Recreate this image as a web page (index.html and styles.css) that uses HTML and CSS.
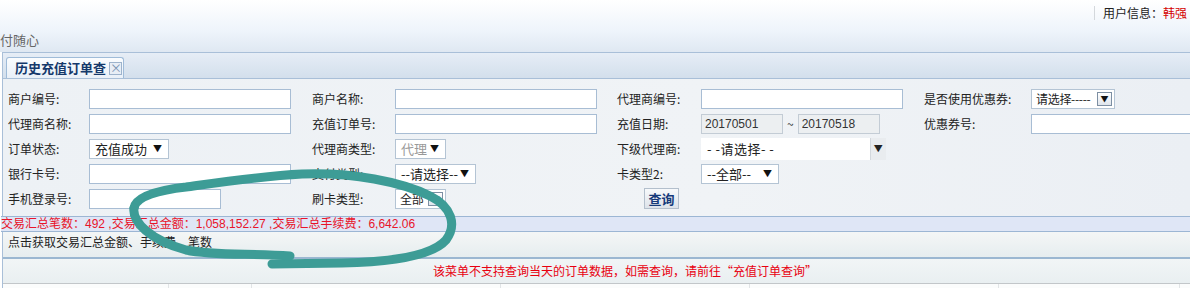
FILE: index.html
```html
<!DOCTYPE html>
<html lang="zh-CN">
<head>
    <meta charset="UTF-8">
    <title>历史充值订单查询</title>
    <link rel="stylesheet" href="styles.css">
</head>
<body>
    <div class="header">
        <div class="topbar">
            <span class="sep"></span>
            <span class="user">用户信息：<b>韩强</b></span>
        </div>
        <div class="brand">付随心</div>
    </div>

    <div class="tabs">
        <div class="tab">历史充值订单查 <span class="close">×</span></div>
    </div>

    <div class="panel">
        <div class="form">
            <label>商户编号:</label>
            <div><input class="txt w202"></div>
            <label>商户名称:</label>
            <div><input class="txt w202"></div>
            <label>代理商编号:</label>
            <div><input class="txt w202"></div>
            <label>是否使用优惠券:</label>
            <div><span class="sel boxed w83">请选择-----<i class="box">▼</i></span></div>

            <label>代理商名称:</label>
            <div><input class="txt w202"></div>
            <label>充值订单号:</label>
            <div><input class="txt w202"></div>
            <label>充值日期:</label>
            <div class="dates"><input class="txt date" value="20170501"><span>~</span><input class="txt date" value="20170518"></div>
            <label>优惠券号:</label>
            <div><input class="txt w202"></div>

            <label>订单状态:</label>
            <div><span class="sel w80">充值成功 <i>▼</i></span></div>
            <label>代理商类型:</label>
            <div><span class="sel w51 dim">代理 <i>▼</i></span></div>
            <label>下级代理商:</label>
            <div><span class="combo">- -请选择- -<i>▼</i></span></div>
            <label></label>
            <div></div>

            <label>银行卡号:</label>
            <div><input class="txt w202"></div>
            <label>支付类型:</label>
            <div><span class="sel w81">--请选择-- <i>▼</i></span></div>
            <label>卡类型2:</label>
            <div><span class="sel w78">--全部-- <i>▼</i></span></div>
            <label></label>
            <div></div>

            <label>手机登录号:</label>
            <div><input class="txt w132"></div>
            <label>刷卡类型:</label>
            <div><span class="sel boxed w51">全部<i class="box">▼</i></span></div>
            <div class="btncell"><button>查询</button></div>
            <div></div>
            <label></label>
            <div></div>
        </div>

        <div class="summary">交易汇总笔数：492 ,交易汇总金额：1,058,152.27 ,交易汇总手续费：6,642.06</div>
        <div class="fetch">点击获取交易汇总金额、手续费、笔数</div>
        <div class="notice">该菜单不支持查询当天的订单数据，如需查询，请前往“充值订单查询”</div>
        <div class="grid-head">
            <span style="width:165px"></span><span style="width:82px"></span><span style="width:248px"></span><span style="width:248px"></span><span style="width:248px"></span><span style="width:180px"></span>
        </div>
    </div>

    <svg class="scribble" width="1190" height="288" viewBox="0 0 1190 288">
        <path d="M134,208 C136,196 160,190 186,187 C222,182 262,176 302,174 C352,172 402,182 430,196 C452,207 457,225 446,240 C432,256 392,262 342,263 L272,264" />
        <path d="M134,208 C132,222 150,240 186,250 C214,256 250,253 290,256" />
    </svg>
</body>
</html>
```

FILE: styles.css
```css
body{
    margin: 0;
    width: 1190px;
    height: 288px;
    overflow: hidden;
    position: relative;
    font-family: "Noto Sans CJK SC", "Liberation Sans", sans-serif;
    font-size: 12px;
    color: #222;
    background: #fff;
}
.header{
    height: 52px;
    background: linear-gradient(180deg, #ffffff 0%, #eef4fb 60%, #dfe8f2 100%);
}
.topbar{
    height: 28px;
    display: flex;
    justify-content: flex-end;
    align-items: center;
}
.sep{
    width: 1px;
    height: 14px;
    background: #d4d8dc;
    margin-right: 8px;
    margin-top: -3px;
}
.user{
    width: 87px;
    white-space: nowrap;
    margin-top: -3px;
}
.user b{
    font-weight: normal;
    color: #d40000;
}
.brand{
    color: #666;
    font-size: 13px;
    line-height: 24px;
}
.tabs{
    height: 25px;
    border-top: 1px solid #a9bfd8;
    border-left: 1px solid #a9bfd8;
    margin-left: 2px;
    background: linear-gradient(180deg, #e6edf6, #d3dfec);
    padding-left: 3px;
    display: flex;
    align-items: flex-end;
}
.tab{
    height: 21px;
    width: 118px;
    box-sizing: border-box;
    border: 1px solid #9fbbd8;
    border-bottom: none;
    border-radius: 3px 3px 0 0;
    background: linear-gradient(180deg, #fafcfe, #e9f0f8);
    color: #15396b;
    font-weight: bold;
    font-size: 13px;
    line-height: 20px;
    padding-left: 8px;
    display: flex;
    align-items: center;
}
.close{
    display: inline-block;
    width: 11px;
    height: 11px;
    line-height: 10px;
    text-align: center;
    border: 1px solid #9db3cc;
    background: #e8eef6;
    color: #7a93b3;
    font-size: 12px;
    font-weight: normal;
    margin-left: 3px;
}
.panel{
    border-left: 1px solid #a9bfd8;
    border-top: 1px solid #a9bfd8;
    margin-left: 2px;
    background: #edf1f5;
}
.form{
    display: grid;
    grid-template-columns: 81px 223px 83px 222px 84px 223px 107px 200px;
    grid-auto-rows: 25px;
    align-items: center;
    padding: 7px 0 5px 5px;
    background: linear-gradient(90deg, #edf1f5, #f0f3f6 60%, #ebeff4);
}
.form label{
    color: #222;
    white-space: nowrap;
}
.txt{
    box-sizing: border-box;
    height: 20px;
    border: 1px solid #a8bdd4;
    background: #fff;
    padding: 0 3px;
    font-family: "Liberation Sans", sans-serif;
    font-size: 12px;
    color: #333;
    display: block;
}
.w202{ width: 202px; }
.w132{ width: 132px; }
.dates{
    display: flex;
    align-items: center;
    gap: 4px;
}
.dates span{ color: #333; }
.date{
    width: 82px;
    background: #eceff1;
    border-color: #c3ccd5;
}
.sel{
    box-sizing: border-box;
    height: 20px;
    display: inline-flex;
    align-items: center;
    justify-content: space-between;
    border: 1px solid #b4c4d4;
    background: #fff;
    padding: 0 6px 0 5px;
    font-size: 13px;
    white-space: nowrap;
    vertical-align: middle;
}
.sel i{
    font-style: normal;
    font-size: 9px;
    color: #111;
}
.sel.dim{ color: #999; }
.w80{ width: 80px; }
.w51{ width: 51px; }
.w81{ width: 81px; }
.w78{ width: 78px; }
.w83{ width: 84px; }
.sel.boxed{
    padding: 0 2px 0 4px;
    font-size: 12px;
    letter-spacing: -0.3px;
}
.sel .box{
    width: 13px;
    height: 12px;
    line-height: 12px;
    text-align: center;
    border: 1px solid #7d8fa3;
    background: linear-gradient(180deg, #fff, #dfe5ec);
    font-size: 8px;
    letter-spacing: 0;
    margin-left: 2px;
}
.combo{
    box-sizing: border-box;
    width: 185px;
    height: 22px;
    display: flex;
    align-items: center;
    justify-content: space-between;
    background: #fff;
    font-size: 13px;
    padding-left: 6px;
    letter-spacing: 0.5px;
}
.combo i{
    font-style: normal;
    font-size: 9px;
    width: 15px;
    height: 22px;
    line-height: 22px;
    text-align: center;
    background: #e9ecef;
    border-left: 1px solid #d3d8dd;
}
.btncell{
    text-align: center;
    padding-left: 5px;
}
button{
    height: 21px;
    width: 35px;
    padding: 0;
    border: 1px solid #b3bfcc;
    background: linear-gradient(180deg, #f7f9fb, #dde3ea);
    color: #163a7a;
    font-family: "Noto Sans CJK SC", sans-serif;
    font-weight: bold;
    font-size: 13px;
}
.summary{
    height: 14px;
    line-height: 14px;
    border-top: 1px solid #9cb6d4;
    border-bottom: 1px solid #9cb6d4;
    background: #dfe6f6;
    color: #e8142a;
    font-size: 12px;
    white-space: nowrap;
    margin-left: -2px;
    font-family: "Liberation Sans", "Noto Sans CJK SC", sans-serif;
}
.fetch{
    height: 25px;
    line-height: 20px;
    padding-left: 5px;
    background: linear-gradient(180deg, #f4f6f6, #e6edef);
    border-bottom: 2px solid #9bb7d1;
    font-size: 12px;
}
.notice{
    height: 24px;
    line-height: 24px;
    padding-left: 430px;
    background: linear-gradient(180deg, #f1f5f6, #e9eff1);
    color: #e80010;
    font-size: 12px;
    white-space: nowrap;
}
.grid-head{
    height: 10px;
    border-top: 1px solid #c2c6c9;
    background: #fbfcfc;
    display: flex;
}
.grid-head span{
    height: 10px;
    border-right: 1px solid #e1e4e6;
}
.scribble{
    position: absolute;
    left: 0;
    top: 0;
    pointer-events: none;
}
.scribble path{
    fill: none;
    stroke: #3d9c96;
    stroke-width: 9;
    stroke-linecap: round;
    stroke-linejoin: round;
}
```
